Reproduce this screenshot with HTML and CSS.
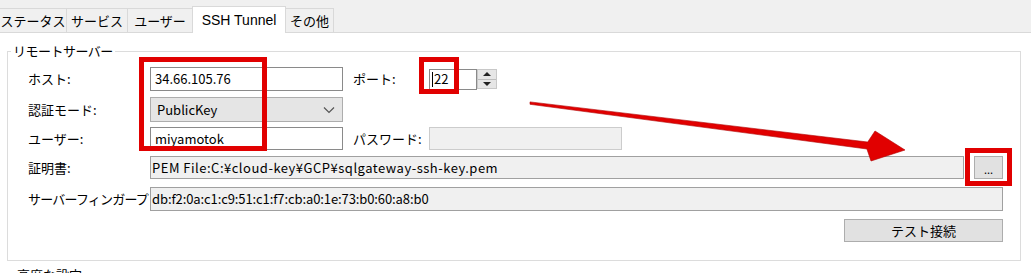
FILE: index.html
```html
<!DOCTYPE html>
<html lang="ja">
<head>
    <meta charset="UTF-8">
    <title>SSH Tunnel</title>
    <link rel="stylesheet" href="styles.css">
</head>
<body>
    <div class="tabs">
        <div class="tab t1">ステータス</div>
        <div class="tab t2">サービス</div>
        <div class="tab t3">ユーザー</div>
        <div class="tab t4 active">SSH Tunnel</div>
        <div class="tab t5">その他</div>
    </div>

    <div class="page">
        <div class="group">
            <span class="legend">リモートサーバー</span>

            <div class="row r1">
                <label class="lbl">ホスト:</label>
                <div class="field box-host">34.66.105.76</div>
                <label class="lbl2">ポート:</label>
                <div class="field box-port"><span class="caret"></span>22</div>
                <div class="spin">
                    <div class="spin-btn"><span class="tri-up"></span></div>
                    <div class="spin-btn"><span class="tri-down"></span></div>
                </div>
            </div>

            <div class="row r2">
                <label class="lbl">認証モード:</label>
                <div class="combo">
                    <span>PublicKey</span>
                    <svg class="chev" width="12" height="8" viewBox="0 0 12 8">
                        <path d="M1 1.5 L6 6.5 L11 1.5" fill="none" stroke="#555" stroke-width="1.2"/>
                    </svg>
                </div>
            </div>

            <div class="row r3">
                <label class="lbl">ユーザー:</label>
                <div class="field box-host">miyamotok</div>
                <label class="lbl2">パスワード:</label>
                <div class="field box-pass"></div>
            </div>

            <div class="row r4">
                <label class="lbl">証明書:</label>
                <div class="field readonly grow pem">PEM File:C:¥cloud-key¥GCP¥sqlgateway-ssh-key.pem</div>
                <button class="btn btn-dots">...</button>
            </div>

            <div class="row r5">
                <label class="lbl clip">サーバーフィンガープリント:</label>
                <div class="field readonly grow fp">db:f2:0a:c1:c9:51:c1:f7:cb:a0:1e:73:b0:60:a8:b0</div>
            </div>

            <div class="row r6">
                <button class="btn btn-test">テスト接続</button>
            </div>
        </div>

        <div class="adv">高度な設定</div>
    </div>

    <!-- annotations -->
    <div class="mark mark-host"></div>
    <div class="mark mark-port"></div>
    <div class="mark mark-dots"></div>
    <svg class="arrow" width="1031" height="273" viewBox="0 0 1031 273">
        <polygon points="530,101.9 867.7,142 875,131 905,150 871,161 866.9,149 530,104.3" fill="#e10000" stroke="#b00000" stroke-width="0.6" stroke-linejoin="round"/>
    </svg>
</body>
</html>
```

FILE: styles.css
```css
html {
    overflow: hidden;
}

body {
    margin: 0;
    background-color: #f0f0f0;
    font-family: "Noto Sans CJK JP", "Liberation Sans", sans-serif;
    font-size: 13px;
    line-height: 16px;
    color: #000;
    position: relative;
    height: 273px;
    overflow: hidden;
}

/* tab strip */
.tabs {
    display: flex;
    align-items: flex-end;
    height: 32px;
    margin-left: -1px;
}

.tab {
    box-sizing: border-box;
    height: 24px;
    border: 1px solid #d9d9d9;
    border-bottom: none;
    margin-left: -1px;
    background-color: #f0f0f0;
    text-align: center;
    line-height: 23px;
    white-space: nowrap;
}

.tab:first-child {
    margin-left: 0;
}

.t1 { width: 68px; }
.t2 { width: 62px; }
.t3 { width: 66px; }
.t4 { width: 94px; }
.t5 { width: 49px; }

.tab.active {
    height: 27px;
    margin-bottom: -1px;
    background-color: #fff;
    position: relative;
    z-index: 1;
    line-height: 26px;
    font-family: "Liberation Sans", sans-serif;
    font-size: 14px;
}

/* tab page */
.page {
    background-color: #fff;
    border-top: 1px solid #d9d9d9;
    padding: 18px 10px 0 7px;
    height: 222px;
    overflow: hidden;
}

.group {
    position: relative;
    box-sizing: border-box;
    height: 210px;
    border: 1px solid #dcdcdc;
    padding: 15px 17px 0 20px;
}

.legend {
    position: absolute;
    top: -9px;
    left: 3px;
    padding: 0 2px;
    background-color: #fff;
    letter-spacing: -0.5px;
}

.row {
    display: flex;
    align-items: center;
}

.r1 { height: 24px; }
.r2 { height: 25px; margin-top: 6px; }
.r3 { height: 23px; margin-top: 5px; }
.r4 { height: 23px; margin-top: 6px; }
.r5 { height: 24px; margin-top: 8px; }
.r6 { height: 23px; margin-top: 8px; justify-content: flex-end; }

.lbl {
    flex: none;
    width: 122px;
    white-space: nowrap;
}

.clip {
    overflow: hidden;
    letter-spacing: -0.8px;
}

.lbl2 {
    flex: none;
    width: 76px;
    margin-left: 10px;
    white-space: nowrap;
}

.field {
    box-sizing: border-box;
    height: 100%;
    border: 1px solid #8a8a8a;
    background-color: #fff;
    padding-left: 4px;
    display: flex;
    align-items: center;
    white-space: nowrap;
    overflow: hidden;
}

.box-host {
    flex: none;
    width: 193px;
}

.box-port {
    flex: none;
    width: 48px;
    height: 21px;
    padding-left: 2px;
}

.caret {
    display: inline-block;
    width: 1px;
    height: 15px;
    background-color: #000;
    margin-right: 1px;
}

.spin {
    flex: none;
    box-sizing: border-box;
    width: 20px;
    height: 20px;
    border: 1px solid #c8c8c8;
    display: flex;
    flex-direction: column;
}

.spin-btn {
    flex: 1;
    background-color: #e6e6e6;
    display: flex;
    align-items: center;
    justify-content: center;
}

.spin-btn + .spin-btn {
    border-top: 1px solid #bdbdbd;
}

.tri-up {
    width: 0;
    height: 0;
    border-left: 4px solid transparent;
    border-right: 4px solid transparent;
    border-bottom: 4px solid #222;
}

.tri-down {
    width: 0;
    height: 0;
    border-left: 4px solid transparent;
    border-right: 4px solid transparent;
    border-top: 4px solid #222;
}

.combo {
    box-sizing: border-box;
    flex: none;
    width: 193px;
    height: 100%;
    border: 1px solid #adadad;
    background-color: #e5e5e5;
    padding: 0 7px 0 6px;
    display: flex;
    align-items: center;
    justify-content: space-between;
}

.box-pass {
    flex: none;
    width: 193px;
    background-color: #f0f0f0;
    border-color: #cccccc;
}

.readonly {
    background-color: #f0f0f0;
    border-color: #a0a0a0;
    padding-left: 1px;
}

.grow {
    flex: 1;
}

.pem {
    letter-spacing: 0.5px;
}

.fp {
    letter-spacing: -0.1px;
}

.btn {
    box-sizing: border-box;
    height: 100%;
    border: 1px solid #adadad;
    background-color: #e1e1e1;
    font-family: inherit;
    font-size: 13px;
    color: #000;
    padding: 0;
}

.btn-dots {
    width: 29px;
    margin-left: 10px;
    font-size: 11px;
    line-height: 24px;
}

.btn-test {
    width: 159px;
}

.adv {
    margin-top: 6px;
    padding-left: 10px;
}

/* red annotation frames */
.mark {
    position: absolute;
    box-sizing: border-box;
    border: 5px solid #e10000;
}

.mark-host {
    left: 139px;
    top: 57px;
    width: 128px;
    height: 94px;
}

.mark-port {
    left: 419px;
    top: 57px;
    width: 40px;
    height: 37px;
}

.mark-dots {
    left: 965px;
    top: 148px;
    width: 47px;
    height: 38px;
}

.arrow {
    position: absolute;
    left: 0;
    top: 0;
    pointer-events: none;
}
```
